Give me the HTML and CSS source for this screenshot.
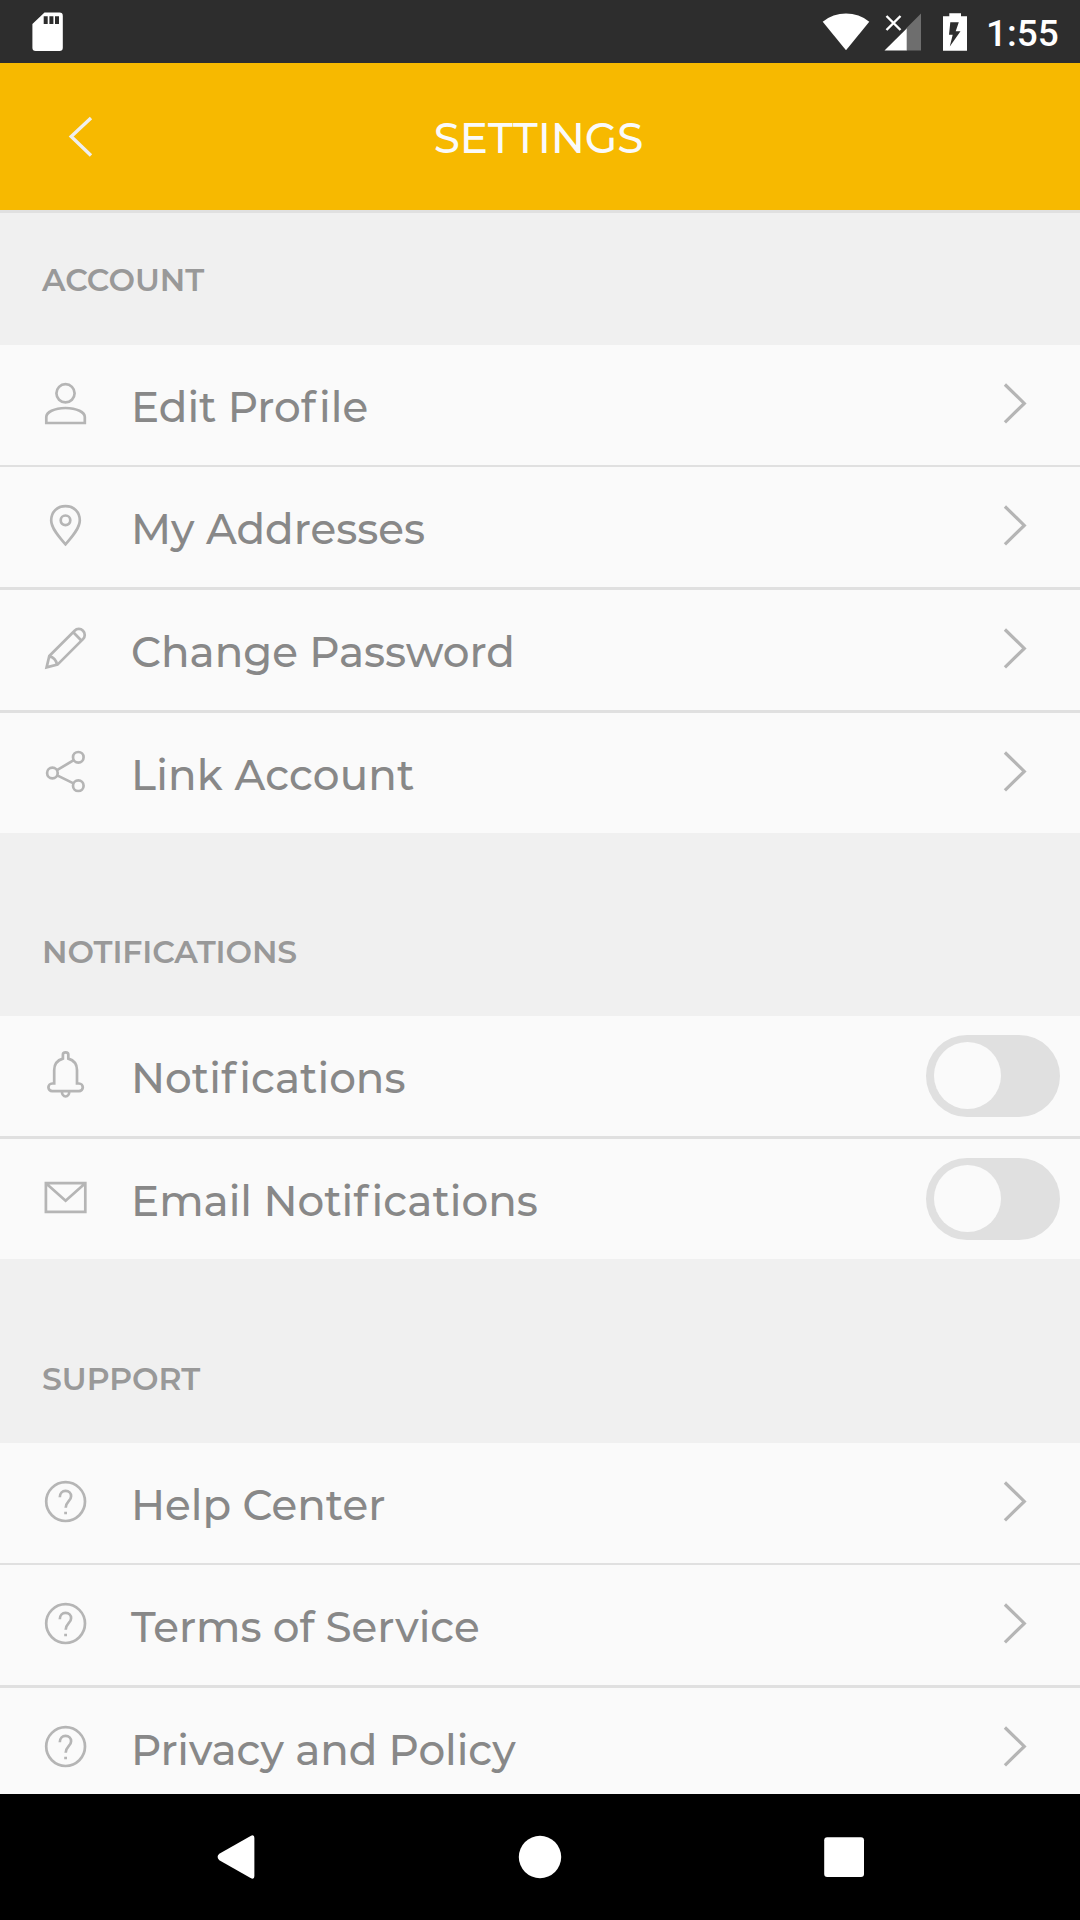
FILE: index.html
```html
<!DOCTYPE html>
<html lang="en">
<head>
<meta charset="utf-8">
<title>Settings</title>
<link rel="stylesheet" href="styles.css">
</head>
<body>
<svg class="defs" aria-hidden="true">
  <symbol id="chevron" viewBox="0 0 24 48"><path d="M1.9 3.5 21.3 22.4 1.9 41.4"/></symbol>
  <symbol id="help" viewBox="0 0 44 48"><circle cx="21.6" cy="22.6" r="19.4"/><path d="M15.8 18.3c0-4 2.5-6.4 5.8-6.4s5.5 2.2 5.5 5.3c0 4.9-5.4 5.2-5.4 11.6M20.2 34h2.8"/></symbol>
</svg>
<div class="screen">
  <header class="status-bar">
    <svg class="sd" viewBox="0 0 32 40"><path fill="#fff" fill-rule="evenodd" d="M12.5.6H27.5a3.3 3.3 0 0 1 3.3 3.3V35.7a3.3 3.3 0 0 1-3.3 3.3H3.7a3.3 3.3 0 0 1-3.3-3.3V12Zm-.8 3.7V12h4V4.3Zm5.7 0V12h4V4.3Zm5.6 0V12h4V4.3Z"/></svg>
    <div class="status-icons">
      <svg class="wifi" viewBox="0 0 48 38"><path fill="#fff" d="M.7 8.7A37 37 0 0 1 47.3 8.7L24 37.3Z"/></svg>
      <svg class="signal" viewBox="0 0 38 38"><path fill="#6e6e6e" d="M37 .5V37.5H22V15.5Z"/><path fill="#fff" d="M.5 37.5 22.7 15.5V37.5Z"/><path stroke="#fff" stroke-width="2.4" d="M2.5 3 16.5 17M16.5 3 2.5 17"/></svg>
      <svg class="battery" viewBox="0 0 24 38"><path fill="#fff" d="M6.3.2H18V3.2H24V37.8H0V3.2H6.3Z"/><path fill="#2d2d2d" d="M7.3 9.2H15.8L12.7 18.2H17.5L6.8 33.5 9.7 21.7H6Z"/></svg>
      <span class="clock">1:55</span>
    </div>
  </header>
  <nav class="title-bar">
    <svg class="back" viewBox="0 0 24 42"><path d="M22 1.9 2.2 20.6 22 39.6"/></svg>
    <h1>SETTINGS</h1>
  </nav>
  <main>
    <h2 class="first">ACCOUNT</h2>
    <div class="row">
      <svg class="icon" viewBox="0 0 44 48"><circle cx="21.5" cy="12.3" r="9.1"/><path d="M2.3 42V36C2.3 31.5 10 27 21.5 27S40.8 31.5 40.8 36V42Z"/></svg>
      <span class="label">Edit Pro<span class="loose">f</span>ile</span><svg class="chevron"><use href="#chevron"/></svg>
    </div>
    <div class="row thin">
      <svg class="icon" viewBox="0 0 44 48"><path d="M21.5 41.3C16 35 7.2 25.5 7.2 17.5 7.2 9 13 3.2 21.5 3.2S35.8 9 35.8 17.5C35.8 25.5 27 35 21.5 41.3Z"/><circle cx="21.5" cy="17.3" r="4.8"/></svg>
      <span class="label">My Addresses</span><svg class="chevron"><use href="#chevron"/></svg>
    </div>
    <div class="row thick">
      <svg class="icon" viewBox="0 0 44 48"><path d="M2.6 41.4 5.3 30 30.6 4.7A5.9 5.9 0 0 1 39 13.1L13.5 38.6ZM29.3 6.3 37.3 14.5M5.3 30.3C9.5 31 12 33.5 13 38.5"/></svg>
      <span class="label">Change Password</span><svg class="chevron"><use href="#chevron"/></svg>
    </div>
    <div class="row thick">
      <svg class="icon" viewBox="0 0 44 48"><circle cx="34.3" cy="8.3" r="5.3"/><circle cx="8.4" cy="24" r="5.3"/><circle cx="34.3" cy="36.7" r="5.3"/><path d="M13 21.1 29.7 11.2M13.2 26.4 29.5 34.4"/></svg>
      <span class="label link">Link Account</span><svg class="chevron"><use href="#chevron"/></svg>
    </div>

    <h2 class="middle">NOTIFICATIONS</h2>
    <div class="row">
      <svg class="icon" viewBox="0 0 44 48"><path d="M18.9 6.6V2.6A2.7 2.2 0 0 1 24.3 2.6V6.6C29.7 8.2 33 12.5 33 18V31.5H35A3.8 3.8 0 0 1 35 39.1H8.2A3.8 3.8 0 0 1 8.2 31.5H10.2V18C10.2 12.5 13.5 8.2 18.9 6.6ZM17.9 39.3A3.7 5.2 0 0 0 25.3 39.3"/></svg>
      <span class="label">Noti<span class="loose">f</span>ications</span><span class="toggle"></span>
    </div>
    <div class="row thick">
      <svg class="icon" viewBox="0 0 44 48"><path d="M1.9 8.2H41.3V36.9H1.9ZM2.5 8.8 21.6 25.7 40.7 8.8"/></svg>
      <span class="label">Email Noti<span class="loose">f</span>ications</span><span class="toggle"></span>
    </div>

    <h2 class="last">SUPPORT</h2>
    <div class="row">
      <svg class="icon"><use href="#help"/></svg>
      <span class="label">Help Center</span><svg class="chevron"><use href="#chevron"/></svg>
    </div>
    <div class="row thin">
      <svg class="icon"><use href="#help"/></svg>
      <span class="label">Terms of Service</span><svg class="chevron"><use href="#chevron"/></svg>
    </div>
    <div class="row thick">
      <svg class="icon"><use href="#help"/></svg>
      <span class="label policy">Privacy and Policy</span><svg class="chevron"><use href="#chevron"/></svg>
    </div>
  </main>
  <footer class="system-nav">
    <svg viewBox="0 0 44 44"><path fill="#fff" d="M36.6.9Q40.4-.8 40.4 3V41Q40.4 44.8 36.6 43.1L5.3 25.2Q1.9 22 5.3 18.8Z"/></svg>
    <svg viewBox="0 0 44 44"><circle cx="22" cy="22" r="21.2" fill="#fff"/></svg>
    <svg viewBox="0 0 44 44"><rect x="2.2" y="2.2" width="39.8" height="39.8" rx="3" fill="#fff"/></svg>
  </footer>
</div>
</body>
</html>
```
FILE: styles.css
```css
* { box-sizing: border-box; }
body { margin: 0; font-family: Montserrat, Inter, sans-serif; font-variant-ligatures: none; }
svg { display: block; flex: none; overflow: visible; }
.defs { display: none; }
h1, h2 { margin: 0; }

.screen { width: 1080px; height: 1920px; display: flex; flex-direction: column; overflow: hidden; background: #f0f0f0; }

.status-bar { flex: none; height: 63px; padding: 0 21px 0 32px; display: flex; align-items: center; justify-content: space-between; background: #2d2d2d; }
.status-icons { display: flex; align-items: center; }
.sd { width: 32px; height: 40px; }
.wifi { width: 48px; height: 38px; margin-right: 14px; }
.signal { width: 38px; height: 38px; margin-right: 21px; }
.battery { width: 24px; height: 38px; margin-right: 19px; }
.clock { width: 73px; padding-top: 4px; font: 500 37px/44px Roboto, sans-serif; color: #fff; }

.title-bar { flex: none; height: 150px; padding: 0 69px; display: grid; grid-template-columns: 24px 1fr 24px; align-items: center; background: #f7b900; border-bottom: 3px solid #e0e0e0; }
.back { width: 24px; height: 42px; fill: none; stroke: #efefef; stroke-width: 3.4; }
.title-bar h1 { padding: 3px 3px 0 0; font-size: 42px; line-height: 52px; font-weight: 500; text-align: center; color: #fafafa; }

main { flex: 1; min-height: 0; overflow: hidden; }
h2 { padding-left: 42px; font-size: 31.5px; line-height: 130px; font-weight: 600; color: #999; }
h2.first { height: 132px; padding-top: 2px; }
h2.middle { height: 183px; padding-top: 54px; letter-spacing: -0.1px; }
h2.last { height: 184px; padding-top: 55px; }

.row { height: 120px; padding: 0 20px 0 44px; display: flex; align-items: center; background: #fafafa; }
.row.thin { height: 122px; border-top: 2px solid #e0e0e0; }
.row.thick { height: 123px; border-top: 3px solid #e0e0e0; }
.icon { width: 44px; height: 48px; margin-right: 43px; fill: none; stroke: #b5b5b5; stroke-width: 2.7; }
.label { flex: 1; padding-top: 4px; font-size: 42px; line-height: 52px; font-weight: 500; color: #888; white-space: nowrap; }
.label.link { letter-spacing: 0.2px; }
.label.policy { letter-spacing: -0.05px; }
.loose { letter-spacing: 3.5px; }
.chevron { width: 24px; height: 48px; margin-right: 33px; fill: none; stroke: #b5b5b5; stroke-width: 3.2; }
.toggle { width: 134px; height: 82px; padding: 7px 8px; border-radius: 41px; background: #e0e0e0; }
.toggle::before { content: ""; display: block; width: 67px; height: 67px; border-radius: 50%; background: #fafafa; }

.system-nav { flex: none; height: 126px; padding: 0 214px; display: flex; align-items: center; justify-content: space-between; background: #000; }
.system-nav svg { width: 44px; height: 44px; }
```
